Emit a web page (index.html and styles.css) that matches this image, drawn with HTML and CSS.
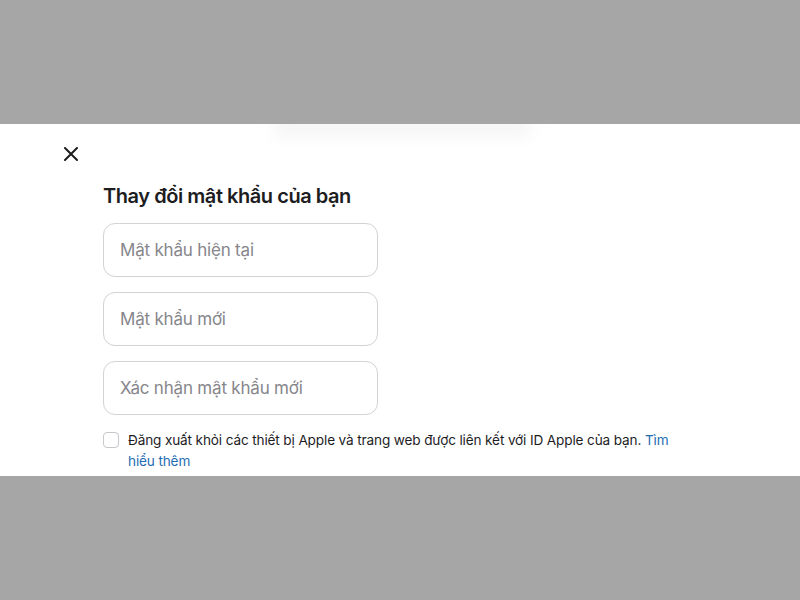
FILE: index.html
```html
<!DOCTYPE html>
<html lang="vi">
<head>
<meta charset="utf-8">
<link rel="stylesheet" href="styles.css">
</head>
<body>
<div class="backdrop-top"></div>
<div class="sheet">
  <div class="ghost"></div>
  <button class="close" aria-label="Đóng">
    <svg width="14" height="14" viewBox="0 0 14 14"><path d="M1 1L13 13M13 1L1 13" stroke="#1d1d1f" stroke-width="2" stroke-linecap="round"/></svg>
  </button>
  <div class="content">
    <h1 class="title">Thay đổi mật khẩu của bạn</h1>
    <div class="fields">
      <div class="field">Mật khẩu hiện tại</div>
      <div class="field">Mật khẩu mới</div>
      <div class="field">Xác nhận mật khẩu mới</div>
    </div>
    <div class="check-row">
      <span class="box"></span>
      <p class="check-text">Đăng xuất khỏi các thiết bị Apple và trang web được liên kết với ID Apple của bạn. <a class="link">Tìm hiểu thêm</a></p>
    </div>
  </div>
</div>
<div class="backdrop-bottom"></div>
</body>
</html>
```
FILE: styles.css
```css
html, body {
  margin: 0;
  padding: 0;
  background: #a6a6a6;
  font-family: Inter, "Noto Sans", "Liberation Sans", sans-serif;
}
.backdrop-top { height: 124px; background: #a6a6a6; }
.backdrop-bottom { height: 124px; background: #a6a6a6; }
.sheet {
  position: relative;
  height: 352px;
  background: #fff;
  overflow: hidden;
}
.ghost {
  position: absolute;
  left: 275px;
  top: -6px;
  width: 255px;
  height: 18px;
  background: #ececec;
  filter: blur(8px);
  opacity: 0.6;
}
.close {
  position: absolute;
  left: 64px;
  top: 23px;
  width: 14px;
  height: 14px;
  padding: 0;
  border: 0;
  background: none;
  display: block;
}
.close svg { display: block; }
.content {
  padding: 57px 0 0 103px;
}
.title {
  margin: 0;
  font-size: 20px;
  line-height: 30px;
  font-weight: 600;
  color: #1d1d1f;
  letter-spacing: -0.45px;
}
.fields {
  display: flex;
  flex-direction: column;
  gap: 15px;
  margin-top: 12px;
  width: 275px;
}
.field {
  box-sizing: border-box;
  height: 54px;
  border: 1px solid #d2d2d7;
  border-radius: 12px;
  padding: 0 16px;
  display: flex;
  align-items: center;
  font-size: 17px;
  color: #86868b;
  letter-spacing: -0.2px;
}
.check-row {
  display: flex;
  align-items: flex-start;
  gap: 9px;
  margin-top: 15px;
}
.box {
  flex: none;
  box-sizing: border-box;
  width: 16px;
  height: 16px;
  border: 1px solid #c7c7cc;
  border-radius: 4px;
  margin-top: 2px;
}
.check-text {
  margin: 0;
  width: 546px;
  font-size: 13.6px;
  line-height: 21px;
  color: #1d1d1f;
  letter-spacing: -0.14px;
}
.link { color: #1f6db3; }
```
